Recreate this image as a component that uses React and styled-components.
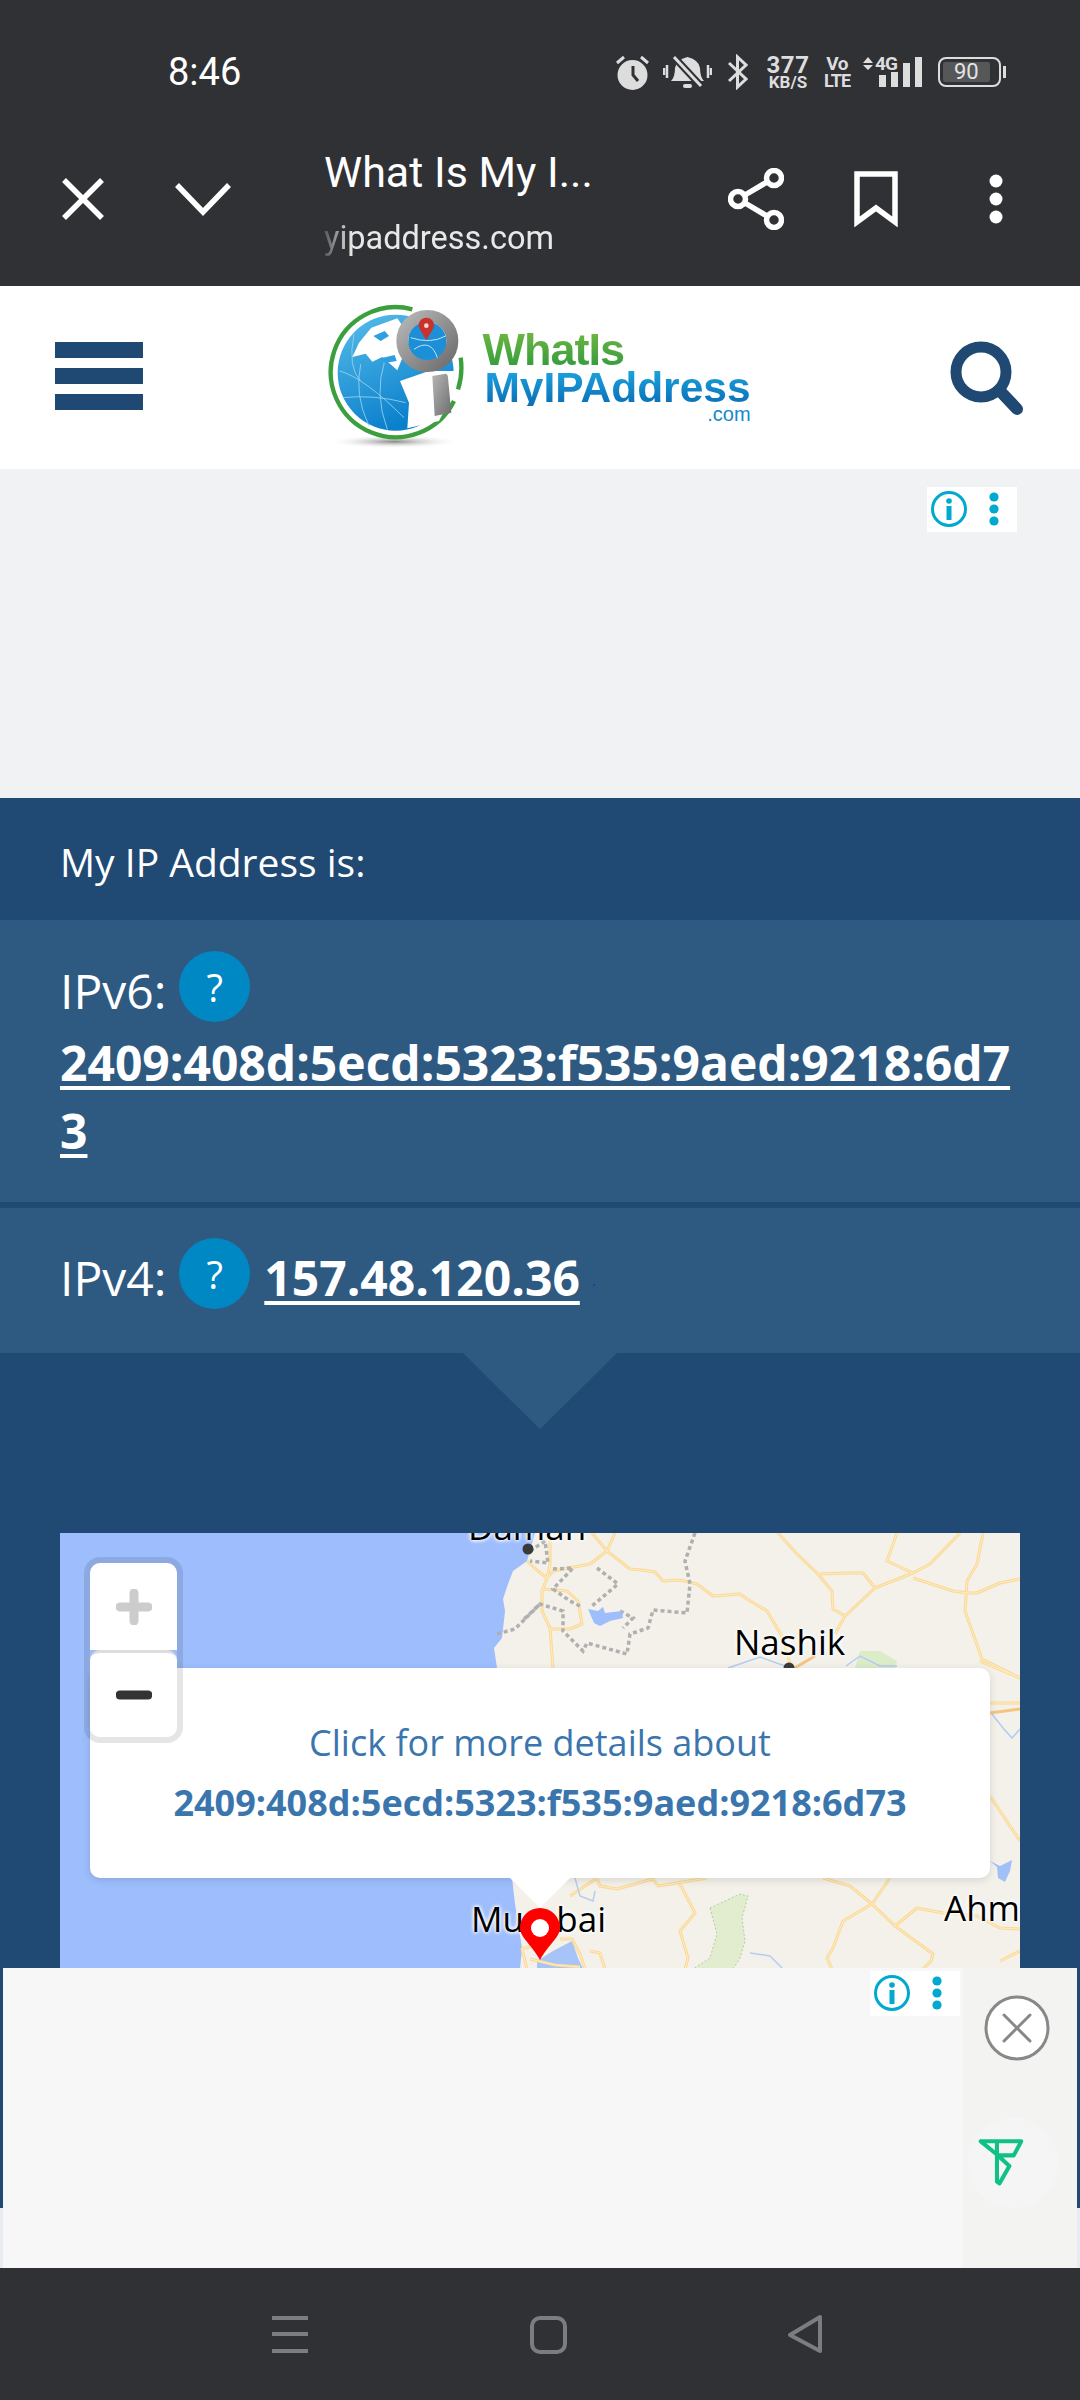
import React from "react"
import styled, { createGlobalStyle } from "styled-components"

const GlobalStyle = createGlobalStyle`
    html, body { margin: 0; padding: 0; background: #303135; }
    * { box-sizing: border-box; }
`

const Page = styled.div`
    position: relative;
    width: 1080px;
    height: 2400px;
    overflow: hidden;
    display: flex;
    flex-direction: column;
    font-family: "Open Sans", sans-serif;
    background: #fff;
`

/* phone chrome */
const StatusBar = styled.div`
    height: 100px;
    padding: 44px 79px 0 168px;
    display: flex;
    align-items: center;
    justify-content: space-between;
    background: #303135;
    font-family: Roboto, sans-serif;
`
const Time = styled.div`
    font-size: 38px;
    line-height: 56px;
    color: #fff;
`
const StatusIcons = styled.div`
    display: flex;
    align-items: center;
    color: #ddd;
`
const StatusIcon = styled.svg`
    display: block;
    margin-right: ${props => props.$mr || 0}px;
`
const Speed = styled.div`
    width: 44px;
    margin-right: 15px;
    display: flex;
    flex-direction: column;
    align-items: center;
    font-weight: 700;
    line-height: 1;
`
const SpeedNum = styled.span`
    font-size: 24px;
    height: 21px;
    letter-spacing: 0.6px;
`
const SpeedUnit = styled.span`
    font-size: 17px;
`
const Volte = styled.div`
    width: 24px;
    margin-right: 13px;
    display: flex;
    flex-direction: column;
    align-items: center;
    font-weight: 700;
    line-height: 17px;
`
const VolteTop = styled.span`
    font-size: 19px;
    letter-spacing: -0.5px;
`
const VolteBottom = styled.span`
    font-size: 18px;
    letter-spacing: -1px;
`
const Battery = styled.div`
    position: relative;
    width: 63px;
    height: 30px;
    padding: 3px;
    border: 2px solid #ddd;
    border-radius: 8px;
    &::after {
        content: "";
        position: absolute;
        right: -7px;
        top: 7px;
        width: 3px;
        height: 12px;
        background: #ddd;
    }
`
const BatteryLevel = styled.div`
    width: 88%;
    height: 100%;
    background: #565759;
    color: #e4e4e4;
    font-size: 22px;
    line-height: 20px;
    text-align: center;
    border-radius: 2px;
`
const Toolbar = styled.div`
    height: 186px;
    padding: 12px 24px 0 23px;
    display: flex;
    align-items: center;
    background: #303135;
    font-family: Roboto, sans-serif;
    color: #fff;
`
const ToolButton = styled.div`
    width: 120px;
    flex: none;
    display: flex;
    justify-content: center;
`
const TitleBlock = styled.div`
    flex: 1;
    padding: 0 0 0 61px;
`
const PageTitle = styled.div`
    font-size: 43px;
    line-height: 60px;
    margin-top: -6px;
`
const PageUrl = styled.div`
    font-size: 32.5px;
    line-height: 44px;
    margin: 14px 0 -9px;
    color: #e8e8e8;
    width: 240px;
    -webkit-mask-image: linear-gradient(90deg, rgba(0,0,0,0.2) 0, #000 28px);
    mask-image: linear-gradient(90deg, rgba(0,0,0,0.2) 0, #000 28px);
`

/* site header */
const SiteHeader = styled.header`
    height: 183px;
    padding: 0 56px 0 55px;
    display: flex;
    align-items: center;
    justify-content: space-between;
    background: #fff;
`
const Hamburger = styled.div`
    width: 88px;
    display: flex;
    flex-direction: column;
    gap: 10px;
    margin-top: -3px;
`
const HamburgerBar = styled.span`
    display: block;
    height: 16px;
    background: #1f4872;
`
const Logo = styled.div`
    display: flex;
    align-items: flex-start;
    margin: -3px 0 0 -18px;
`
const LogoWords = styled.div`
    margin: 28px 0 0 18px;
    font-family: "Liberation Sans", sans-serif;
    font-weight: 700;
`
const LogoGreen = styled.div`
    font-size: 45px;
    line-height: 41px;
    letter-spacing: -1px;
    background: linear-gradient(180deg, #74b843, #2f9a3d);
    -webkit-background-clip: text;
    background-clip: text;
    color: transparent;
`
const LogoBlue = styled.div`
    padding-left: 2px;
    font-size: 42.5px;
    line-height: 36px;
    background: linear-gradient(180deg, #1ba3de, #0a6db6);
    -webkit-background-clip: text;
    background-clip: text;
    color: transparent;
`
const LogoCom = styled.div`
    font-size: 20px;
    font-weight: 400;
    line-height: 16px;
    text-align: right;
    color: #1488cc;
`

/* ads */
const AdSlot = styled.div`
    position: relative;
    height: 329px;
    background: #f1f2f4;
`
const AdBadge = styled.div`
    position: absolute;
    top: ${props => props.$top}px;
    left: ${props => props.$left}px;
    width: 90px;
    height: 45px;
    background: #fff;
`
const StickyAd = styled.div`
    position: absolute;
    left: 3px;
    top: 1968px;
    width: 1074px;
    height: 300px;
    background: #f7f7f8;
`
const StickySide = styled.div`
    position: absolute;
    right: 0;
    top: 0;
    width: 114px;
    height: 100%;
    background: #f3f3f2;
`
const CloseAd = styled.svg`
    position: absolute;
    right: 27px;
    top: 27px;
`
const BrandBadge = styled.div`
    position: absolute;
    right: 19px;
    top: 150px;
    width: 90px;
    height: 90px;
    padding-right: 24px;
    border-radius: 50%;
    background: #f5f5f5;
    display: flex;
    align-items: center;
    justify-content: center;
`

/* ip panel */
const IpPanel = styled.section`
    height: 1410px;
    background: #204a74;
    color: #fff;
`
const IpHeading = styled.div`
    height: 122px;
    padding: 0 60px;
    font-size: 39px;
    line-height: 128px;
`
const IpBand = styled.div`
    position: relative;
    background: #2e5a82;
    padding: ${props => props.$pad};
    margin-bottom: ${props => props.$mb || 0}px;
    font-size: 48px;
    line-height: 68px;
`
const Pointer = styled.div`
    position: absolute;
    left: 463px;
    top: 100%;
    width: 0;
    height: 0;
    border-left: 77px solid transparent;
    border-right: 77px solid transparent;
    border-top: 76px solid #2e5a82;
`
const Help = styled.span`
    display: inline-flex;
    align-items: center;
    justify-content: center;
    width: 71px;
    height: 71px;
    margin: 0 14px 7px 13px;
    border-radius: 50%;
    background: #0088c4;
    font-size: 38px;
    vertical-align: 7px;
`
const IpLink = styled.a`
    font-weight: 700;
    font-size: 48px;
    text-decoration: underline;
    text-decoration-thickness: 4px;
    text-underline-offset: 5px;
    overflow-wrap: anywhere;
`
const Speck = styled.span`
    display: inline-block;
    width: 2px;
    height: 2px;
    margin-left: 13px;
    background: #1c3fa8;
    vertical-align: 10px;
`

/* map */
const MapBox = styled.div`
    position: relative;
    margin: 180px 60px 0;
    height: 676px;
    overflow: hidden;
    background: #f3f1ea;
`
const MapArt = styled.svg`
    display: block;
`
const PlaceLabel = styled.span`
    position: absolute;
    left: ${props => props.$x}px;
    top: ${props => props.$y}px;
    font-size: 35px;
    line-height: 48px;
    color: #000;
    text-shadow: 0 0 3px #fff, 0 0 4px #fff, 0 0 5px #fff;
    white-space: nowrap;
`
const Popup = styled.div`
    position: absolute;
    left: 30px;
    top: 135px;
    width: 900px;
    height: 210px;
    padding-top: 45px;
    background: #fff;
    border-radius: 10px;
    box-shadow: 0 2px 8px rgba(0,0,0,0.12);
    text-align: center;
    color: #3a76ad;
    font-size: 36px;
    line-height: 60px;
    &::after {
        content: "";
        position: absolute;
        left: 420px;
        top: 100%;
        border-left: 30px solid transparent;
        border-right: 30px solid transparent;
        border-top: 30px solid #fff;
    }
`
const PopupIp = styled.div`
    font-weight: 700;
    font-size: 36px;
`
const ZoomControl = styled.div`
    position: absolute;
    left: 24px;
    top: 24px;
    width: 99px;
    border: 6px solid rgba(0,0,0,0.1);
    border-radius: 16px;
    background-clip: padding-box;
`
const ZoomButton = styled.div`
    height: 87px;
    display: flex;
    align-items: center;
    justify-content: center;
    background: #fff;
    border-top: ${props => props.$split ? "3px solid #ddd" : "none"};
    border-radius: ${props => props.$split ? "10px" : "10px 10px 0 0"};
`
const Pin = styled.svg`
    position: absolute;
    left: 458px;
    top: 374px;
`

/* bottom nav */
const SiteFoot = styled.div`
    height: 60px;
    background: #e8ecf0;
`
const NavBar = styled.nav`
    height: 132px;
    background: #303135;
`
const NavArt = styled.svg`
    display: block;
`

const InfoMark = () => (
    <svg width="90" height="45" viewBox="0 0 90 45">
        <circle cx="22" cy="22" r="16.5" fill="none" stroke="#00a9cf" strokeWidth="3" />
        <circle cx="22" cy="14" r="2.8" fill="#00a9cf" />
        <rect x="19.5" y="19" width="5" height="14" fill="#00a9cf" />
        <circle cx="67" cy="10" r="4.6" fill="#00a9cf" />
        <circle cx="67" cy="22" r="4.6" fill="#00a9cf" />
        <circle cx="67" cy="34" r="4.6" fill="#00a9cf" />
    </svg>
)

const LogoMark = () => (
    <svg width="140" height="150" viewBox="80 60 420 450">
        <defs>
            <radialGradient id="lgShadow">
                <stop offset="0" stopColor="#888" />
                <stop offset="1" stopColor="#fff" stopOpacity="0" />
            </radialGradient>
            <linearGradient id="lgOcean" x1="0" y1="0" x2="0.4" y2="1">
                <stop offset="0" stopColor="#58bdea" />
                <stop offset="1" stopColor="#0a80cc" />
            </linearGradient>
            <linearGradient id="lgSteel" x1="0" y1="0" x2="1" y2="1">
                <stop offset="0" stopColor="#b5b5b5" />
                <stop offset="1" stopColor="#6e6e6e" />
            </linearGradient>
        </defs>
        <ellipse cx="290" cy="482" rx="200" ry="20" fill="url(#lgShadow)" />
        <path d="M345 85A195 195 0 1 0 470 360M490 230Q497 280 482 325" fill="none" stroke="#3c9f3e" strokeWidth="13" />
        <circle cx="295" cy="275" r="174" fill="url(#lgOcean)" />
        <path d="M127 270Q200 290 320 410M190 250Q170 340 215 435M262 240Q230 340 270 445M135 350Q230 340 325 365M170 160Q150 260 190 300" fill="none" stroke="#9bd3f0" strokeWidth="2.5" />
        <path d="M185 185L222 140L300 112L340 170L300 268L255 228L225 242L205 218L165 228Z" fill="#fff" />
        <path d="M308 300L395 270L470 270L468 335L425 420L330 442L335 365Z" fill="#fff" />
        <path d="M228 165L262 150L275 165L250 180ZM250 232L292 222L298 240L262 246Z" fill="#2f9fe0" />
        <circle cx="390" cy="180" r="75" fill="none" stroke="url(#lgSteel)" strokeWidth="36" />
        <circle cx="390" cy="180" r="57" fill="#1c8fd6" />
        <path d="M340 170Q400 190 445 165M350 205Q400 170 420 230" fill="none" stroke="#bfe3f5" strokeWidth="3" />
        <path d="M387 178L365 140A23 23 0 1 1 409 140Z" fill="#c8322b" />
        <circle cx="387" cy="134" r="7" fill="#f4d6d0" />
        <path d="M405 285L445 278Q452 280 452 290L462 395L412 405Z" fill="url(#lgSteel)" />
    </svg>
)

const roads = [
    "M592 1532L607 1550L630 1568L642 1569L655 1571L663 1580L680 1579L697 1583L713 1595L740 1593L747 1598L767 1610L783 1637L790 1663",
    "M615 1532L607 1550L590 1563L553 1570L547 1577L542 1590L542 1610L550 1627L553 1667",
    "M550 1532L550 1563L547 1577M527 1560L538 1570L547 1577",
    "M543 1588L567 1590L578 1600L582 1623L570 1628L550 1628",
    "M778 1532L797 1553L818 1573L848 1572L863 1572L875 1587L913 1572L887 1560L897 1532",
    "M818 1573L832 1590L833 1608L845 1615L875 1587M845 1615L835 1633",
    "M913 1572L930 1563L960 1532M913 1577L953 1590L967 1592L977 1592L1000 1582L1020 1578",
    "M983 1532L977 1563L967 1580L965 1610L982 1658L1020 1677",
    "M597 1877L600 1885L617 1888L653 1878L658 1885L707 1877M680 1883L695 1912L680 1930L688 1957L685 1968",
    "M823 1877L850 1885L872 1903L890 1877M872 1903L843 1920L833 1947L827 1957L832 1968",
    "M872 1903L895 1925L933 1953L931 1960L923 1968M895 1925L917 1907L943 1912L977 1915L1000 1927L1020 1928M1000 1960L1020 1950",
    "M980 1660L1020 1677M990 1702L1020 1702M990 1795L1020 1840",
    "M560 1938L572 1938L580 1953L585 1968M590 1950L600 1952L605 1968M527 1968L522 1948L545 1942M530 1958L555 1964L580 1966",
    "M570 1895L597 1877",
].join("")

const MapDrawing = () => (
    <MapArt width="960" height="436" viewBox="60 1532 960 436">
        <path d="M60 1532H535L527 1560L513 1570L508 1583L503 1598L505 1610L502 1637L494 1647L497 1667L512 1877L515 1903L522 1947L520 1968H60Z" fill="#9dbdfc" />
        <path d="M553 1950L572 1940L578 1957L583 1968H537L537 1960Z" fill="#a6c4f7" />
        <path d="M710 1907L740 1893L748 1895L742 1917L745 1940L740 1957L733 1968H693L710 1957L717 1933Z" fill="#e2edd0" stroke="#a9d39a" strokeWidth="1" strokeDasharray="2 2" />
        <path d="M860 1650L880 1650L897 1660L895 1667H855Z" fill="#dcebc8" />
        <path d={roads} fill="none" stroke="#fbd893" strokeWidth="3" strokeLinejoin="round" />
        <path d={roads} fill="none" stroke="#fdeec8" strokeWidth="1" strokeLinejoin="round" />
        <path d="M990 1712L1020 1708M793 1668L815 1655" fill="none" stroke="#f5c47f" strokeWidth="3" />
        <g fill="none" stroke="#b0b0b0" strokeWidth="3.5" strokeDasharray="4 3">
            <path d="M695 1532L685 1560L690 1583L687 1612L653 1609L648 1627L630 1633L627 1653L587 1642L583 1650L563 1630L563 1610L540 1603L522 1620" />
            <path d="M553 1568L573 1567L553 1588L570 1600L580 1605" />
            <path d="M597 1567L618 1583L592 1605M620 1610L633 1617L623 1627" />
            <path d="M530 1550L545 1540L548 1562L530 1560M497 1633L515 1628L540 1603" />
        </g>
        <path d="M588 1608L598 1610L603 1606L605 1612L622 1610L623 1617L610 1620L600 1625L594 1622Z" fill="#9dbdfc" />
        <g fill="none" stroke="#b2cdf3" strokeWidth="1.5">
            <path d="M728 1667L760 1656L785 1665M846 1665L860 1655L880 1665L897 1665" />
            <path d="M575 1877L580 1895L593 1900L595 1890M750 1952L770 1955L783 1968" />
            <path d="M992 1713L1003 1727L1012 1737L1020 1728" />
        </g>
        <path d="M990 1860L1000 1865L1012 1859L1010 1870L1005 1881L998 1877L997 1866Z" fill="#a2c0f8" />
        <circle cx="528" cy="1548" r="5.5" fill="#3a3a3a" />
        <circle cx="789" cy="1667" r="5.5" fill="#3a3a3a" />
    </MapArt>
)

export default function App() {
    return (
        <Page>
            <GlobalStyle />
            <StatusBar>
                <Time>8:46</Time>
                <StatusIcons>
                    <StatusIcon width="33" height="36" viewBox="0 0 33 36" $mr={14}>
                        <circle cx="16.5" cy="21" r="15" fill="#ddd" />
                        <path d="M17 12V21L22 27" fill="none" stroke="#303135" strokeWidth="3" />
                        <path d="M1 9L8 3M32 9L25 3" stroke="#ddd" strokeWidth="3" />
                    </StatusIcon>
                    <StatusIcon width="49" height="36" viewBox="0 0 49 36" $mr={15}>
                        <path d="M8 27Q12 23 12 14Q13 6 24.5 3Q36 6 37 14Q37 23 41 27Z" fill="#ddd" />
                        <rect x="20" y="30" width="9" height="4" rx="2" fill="#ddd" />
                        <path d="M11 3L38 32" stroke="#303135" strokeWidth="7" />
                        <path d="M11 3L38 32" stroke="#ddd" strokeWidth="3" />
                        <path d="M1 14V21M45 11V24M48 14V21M4 11V24" stroke="#ddd" strokeWidth="2.5" />
                    </StatusIcon>
                    <StatusIcon width="21" height="36" viewBox="0 0 21 36" $mr={18}>
                        <path d="M2 9L19 25L10.5 33V3L19 11L2 27" fill="none" stroke="#ddd" strokeWidth="3" />
                    </StatusIcon>
                    <Speed>
                        <SpeedNum>377</SpeedNum>
                        <SpeedUnit>KB/S</SpeedUnit>
                    </Speed>
                    <Volte>
                        <VolteTop>Vo</VolteTop>
                        <VolteBottom>LTE</VolteBottom>
                    </Volte>
                    <StatusIcon width="62" height="34" viewBox="0 0 62 34" $mr={14}>
                        <path d="M1 8L6 2L11 8ZM1 10H11L6 15Z" fill="#ddd" />
                        <text x="13" y="15" fontFamily="Roboto, sans-serif" fontWeight="700" fontSize="19" fill="#ddd" textLength="23">4G</text>
                        <rect x="17" y="20" width="7" height="12" fill="#ddd" />
                        <rect x="29" y="17" width="7" height="15" fill="#ddd" />
                        <rect x="41" y="8" width="7" height="24" fill="#ddd" />
                        <rect x="53" y="2" width="7" height="30" fill="#ddd" />
                    </StatusIcon>
                    <Battery>
                        <BatteryLevel>90</BatteryLevel>
                    </Battery>
                </StatusIcons>
            </StatusBar>
            <Toolbar>
                <ToolButton>
                    <svg width="44" height="44" viewBox="0 0 44 44"><path d="M3 3L41 41M41 3L3 41" stroke="#fff" strokeWidth="5.5" /></svg>
                </ToolButton>
                <ToolButton>
                    <svg width="56" height="34" viewBox="0 0 56 34"><path d="M2 3L28 30L54 3" fill="none" stroke="#fff" strokeWidth="5.5" /></svg>
                </ToolButton>
                <TitleBlock>
                    <PageTitle>What Is My I...</PageTitle>
                    <PageUrl>yipaddress.com</PageUrl>
                </TitleBlock>
                <ToolButton>
                    <svg width="56" height="62" viewBox="0 0 56 62" fill="none" stroke="#fff" strokeWidth="5.5">
                        <circle cx="46" cy="10" r="7.5" />
                        <circle cx="10" cy="31" r="7.5" />
                        <circle cx="46" cy="52" r="7.5" />
                        <path d="M17 27L39 14M17 35L39 48" />
                    </svg>
                </ToolButton>
                <ToolButton>
                    <svg width="44" height="56" viewBox="0 0 44 56"><path d="M3 3H41V51L22 37L3 51Z" fill="none" stroke="#fff" strokeWidth="5.5" /></svg>
                </ToolButton>
                <ToolButton>
                    <svg width="14" height="50" viewBox="0 0 14 50" fill="#fff">
                        <circle cx="7" cy="7" r="6.5" />
                        <circle cx="7" cy="25" r="6.5" />
                        <circle cx="7" cy="43" r="6.5" />
                    </svg>
                </ToolButton>
            </Toolbar>
            <SiteHeader>
                <Hamburger>
                    <HamburgerBar />
                    <HamburgerBar />
                    <HamburgerBar />
                </Hamburger>
                <Logo>
                    <LogoMark />
                    <LogoWords>
                        <LogoGreen>WhatIs</LogoGreen>
                        <LogoBlue>MyIPAddress</LogoBlue>
                        <LogoCom>.com</LogoCom>
                    </LogoWords>
                </Logo>
                <svg width="74" height="74" viewBox="0 0 74 74" fill="none" stroke="#1f4872">
                    <circle cx="31" cy="31" r="25" strokeWidth="11" />
                    <path d="M50 50L67 68" strokeWidth="12" strokeLinecap="round" />
                </svg>
            </SiteHeader>
            <AdSlot>
                <AdBadge $top={18} $left={927}><InfoMark /></AdBadge>
            </AdSlot>
            <IpPanel>
                <IpHeading>My IP Address is:</IpHeading>
                <IpBand $pad="31px 60px 37px" $mb={6}>
                    IPv6:<Help>?</Help>
                    <IpLink>2409:408d:5ecd:5323:f535:9aed:9218:6d73</IpLink>
                </IpBand>
                <IpBand $pad="30px 60px 37px">
                    IPv4:<Help>?</Help>
                    <IpLink>157.48.120.36</IpLink>
                    <Speck />
                    <Pointer />
                </IpBand>
                <MapBox>
                    <MapDrawing />
                    <PlaceLabel $x={408} $y={-30}>Daman</PlaceLabel>
                    <PlaceLabel $x={674} $y={85}>Nashik</PlaceLabel>
                    <PlaceLabel $x={411} $y={362}>Mumbai</PlaceLabel>
                    <PlaceLabel $x={884} $y={351}>Ahm</PlaceLabel>
                    <Pin width="44" height="54" viewBox="0 0 44 54">
                        <path d="M22 53C14 38 2 30 2 21A20 20 0 0 1 42 21C42 30 30 38 22 53Z" fill="#f00" />
                        <circle cx="22" cy="21" r="9" fill="#fff" />
                    </Pin>
                    <Popup>
                        <div>Click for more details about</div>
                        <PopupIp>2409:408d:5ecd:5323:f535:9aed:9218:6d73</PopupIp>
                    </Popup>
                    <ZoomControl>
                        <ZoomButton>
                            <svg width="36" height="36" viewBox="0 0 36 36"><path d="M18 4V32M4 18H32" stroke="#ccc" strokeWidth="9" strokeLinecap="round" /></svg>
                        </ZoomButton>
                        <ZoomButton $split>
                            <svg width="36" height="10" viewBox="0 0 36 10"><path d="M4 5H32" stroke="#333" strokeWidth="9" strokeLinecap="round" /></svg>
                        </ZoomButton>
                    </ZoomControl>
                </MapBox>
            </IpPanel>
            <SiteFoot />
            <NavBar>
                <NavArt width="1080" height="132" viewBox="0 0 1080 132" fill="none" stroke="#7c7d80" strokeWidth="4">
                    <path d="M272 50H308M272 66H308M272 83H308" />
                    <rect x="532" y="50" width="33" height="34" rx="8" />
                    <path d="M820 49V83L790 67Z" strokeLinejoin="round" />
                </NavArt>
            </NavBar>
            <StickyAd>
                <StickySide />
                <AdBadge $top={3} $left={867}><InfoMark /></AdBadge>
                <CloseAd width="66" height="66" viewBox="0 0 66 66">
                    <circle cx="33" cy="33" r="31" fill="#fff" stroke="#888" strokeWidth="3" />
                    <path d="M20 20L46 46M46 20L20 46" stroke="#888" strokeWidth="3" strokeLinecap="round" />
                </CloseAd>
                <BrandBadge>
                    <svg width="48" height="50" viewBox="408 535 154 155" fill="none" stroke="#10c185" strokeWidth="13" strokeLinejoin="round" strokeLinecap="round">
                        <path d="M420 543H550L526 588H472M420 543L468 582L512 622L480 678L472 672V543" />
                    </svg>
                </BrandBadge>
            </StickyAd>
        </Page>
    )
}
